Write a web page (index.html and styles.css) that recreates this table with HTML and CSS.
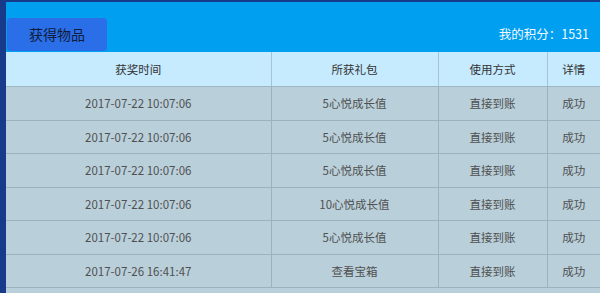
FILE: index.html
```
<!DOCTYPE html>
<html>
<head>
<meta charset="utf-8">
<link rel="stylesheet" href="styles.css">
</head>
<body>
<div class="panel">
  <div class="topbar">
    <div class="tab">获得物品</div>
    <div class="score">我的积分：1531</div>
  </div>
  <table class="grid">
    <colgroup>
      <col class="c1"><col class="c2"><col class="c3"><col class="c4">
    </colgroup>
    <thead>
      <tr><th>获奖时间</th><th>所获礼包</th><th>使用方式</th><th class="last">详情</th></tr>
    </thead>
    <tbody>
      <tr><td>2017-07-22 10:07:06</td><td>5心悦成长值</td><td>直接到账</td><td class="last">成功</td></tr>
      <tr><td>2017-07-22 10:07:06</td><td>5心悦成长值</td><td>直接到账</td><td class="last">成功</td></tr>
      <tr><td>2017-07-22 10:07:06</td><td>5心悦成长值</td><td>直接到账</td><td class="last">成功</td></tr>
      <tr><td>2017-07-22 10:07:06</td><td>10心悦成长值</td><td>直接到账</td><td class="last">成功</td></tr>
      <tr><td>2017-07-22 10:07:06</td><td>5心悦成长值</td><td>直接到账</td><td class="last">成功</td></tr>
      <tr><td>2017-07-26 16:41:47</td><td>查看宝箱</td><td>直接到账</td><td class="last">成功</td></tr>
    </tbody>
  </table>
</div>
</body>
</html>
```
FILE: styles.css
```
html, body {
  margin: 0;
  padding: 0;
  background: #173a8a;
  height: 100%;
  overflow: hidden;
}
body {
  box-sizing: border-box;
  padding: 2px 0 0 6px;
  font-family: "Noto Sans CJK SC", "Noto Sans", sans-serif;
}
.panel {
  background: #b9cfda;
  height: 100%;
  overflow: hidden;
}
.topbar {
  height: 50px;
  background: #009ff0;
  display: flex;
  align-items: flex-end;
  justify-content: space-between;
}
.tab {
  margin-left: 1px;
  width: 100px;
  height: 33px;
  margin-bottom: 1px;
  background: #2a6ee8;
  border-radius: 4px;
  color: #111d3a;
  font-size: 14px;
  line-height: 33px;
  text-align: center;
}
.score {
  color: #f2f8ff;
  font-size: 12.5px;
  align-self: center;
  margin-top: 12px;
  margin-right: 11px;
}
.grid {
  border-collapse: collapse;
  table-layout: fixed;
  width: 594px;
}
.c1 { width: 265px; }
.c2 { width: 167px; }
.c3 { width: 109px; }
.c4 { width: 53px; }
.grid th {
  background: #c6eafe;
  color: #333;
  font-weight: normal;
  font-size: 11.5px;
  height: 34px;
  padding: 0;
  border-right: 1px solid #a6c3d3;
  border-bottom: 1px solid #9fb6c4;
}
.grid td {
  color: #505050;
  font-size: 11.5px;
  height: 32.5px;
  padding: 0;
  text-align: center;
  border-right: 1px solid #9cb2c0;
  border-bottom: 1px solid #9cb2c0;
}
.grid .last {
  border-right: none;
}
```
